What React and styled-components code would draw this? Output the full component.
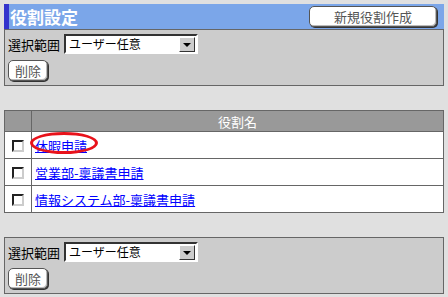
import React from 'react';
import styled, { createGlobalStyle } from 'styled-components';

const roles = ['休暇申請', '営業部-稟議書申請', '情報システム部-稟議書申請'];

function App() {
  return (
    <>
      <GlobalStyle />
      <Page>
        <TitleBar>
          <Title>役割設定</Title>
          <RoundButton wide>新規役割作成</RoundButton>
        </TitleBar>
        <ScopePanel />

        <RoleTable>
          <thead>
            <tr>
              <HeadCell narrow />
              <HeadCell>役割名</HeadCell>
            </tr>
          </thead>
          <tbody>
            {roles.map((name, i) => (
              <tr key={name}>
                <CheckCell><Check /></CheckCell>
                <NameCell>
                  <RoleLink href="#">
                    {name}
                    {i === 0 && <Circle />}
                  </RoleLink>
                </NameCell>
              </tr>
            ))}
          </tbody>
        </RoleTable>

        <ScopePanel bottom />
      </Page>
    </>
  );
}

function ScopePanel({ bottom }) {
  return (
    <Panel bottom={bottom}>
      <Row>
        <Label>選択範囲</Label>
        <Select>
          <SelectText>ユーザー任意</SelectText>
          <Arrow />
        </Select>
      </Row>
      <Row>
        <RoundButton>削除</RoundButton>
      </Row>
    </Panel>
  );
}

export default App;

const GlobalStyle = createGlobalStyle`
  body {
    margin: 0;
    background: #e0e0e0;
    font-family: "Noto Sans CJK JP", "DejaVu Sans", sans-serif;
  }
`;

const Page = styled.div`
  padding: 4px 4px 0 4px;
  width: 440px;
`;

const TitleBar = styled.div`
  display: flex;
  align-items: center;
  justify-content: space-between;
  height: 25px;
  background: #7ba6e9;
  border-left: 5px solid #3333cc;
  padding-right: 7px;
`;

const Title = styled.h1`
  margin: 0 0 0 1px;
  font-size: 17px;
  line-height: 25px;
  font-weight: bold;
  color: #fff;
`;

const RoundButton = styled.button`
  box-sizing: border-box;
  height: 21px;
  width: ${p => (p.wide ? '128px' : '40px')};
  padding: 0;
  font-family: inherit;
  font-size: 13px;
  line-height: 19px;
  color: #555;
  background: #fff;
  border: 1px solid #555;
  border-radius: 5px;
  box-shadow: 1px 1px 0 #333, inset -1px -1px 0 #bbb;
`;

const Panel = styled.div`
  display: flex;
  flex-direction: column;
  gap: 6px;
  box-sizing: border-box;
  width: 440px;
  height: 57px;
  margin-top: ${p => (p.bottom ? '24px' : '0')};
  padding: 4px 3px;
  background: #cccccc;
  border: 1px solid #666;
`;

const Row = styled.div`
  display: flex;
  align-items: center;
  gap: 4px;
`;

const Label = styled.span`
  font-size: 13px;
  color: #000;
`;

const Select = styled.div`
  box-sizing: border-box;
  display: flex;
  align-items: center;
  justify-content: space-between;
  width: 134px;
  height: 20px;
  background: #fff;
  border: 2px solid;
  border-color: #333 #fff #fff #333;
  padding: 0 1px 0 3px;
`;

const SelectText = styled.span`
  font-size: 12px;
  line-height: 16px;
  color: #000;
`;

const Arrow = styled.span`
  position: relative;
  box-sizing: border-box;
  width: 16px;
  height: 15px;
  background: #ccc;
  border: 1px solid;
  border-color: #fff #333 #333 #fff;
  &::after {
    content: '';
    position: absolute;
    left: 3px;
    top: 5px;
    border-left: 4px solid transparent;
    border-right: 4px solid transparent;
    border-top: 4px solid #000;
  }
`;

const RoleTable = styled.table`
  margin-top: 24px;
  width: 440px;
  border-collapse: collapse;
  border: 1px solid #666;
  background: #fff;
`;

const HeadCell = styled.th`
  height: 20px;
  width: ${p => (p.narrow ? '26px' : 'auto')};
  padding: 0;
  background: #999;
  color: #fff;
  font-size: 13px;
  font-weight: normal;
  border: 1px solid #666;
`;

const CheckCell = styled.td`
  height: 26px;
  padding: 0;
  border: 1px solid #666;
  text-align: center;
  vertical-align: middle;
`;

const Check = styled.span`
  display: inline-block;
  box-sizing: border-box;
  width: 12px;
  height: 12px;
  margin-top: 3px;
  background: #fff;
  border: 2px solid;
  border-color: #222 #ccc #ccc #222;
`;

const NameCell = styled.td`
  padding: 0 0 0 3px;
  border: 1px solid #666;
  font-size: 13px;
`;

const RoleLink = styled.a`
  position: relative;
  color: #0000ff;
  text-decoration: underline;
`;

const Circle = styled.span`
  position: absolute;
  left: -5px;
  top: -4px;
  width: 62px;
  height: 16px;
  border: 3px solid #e8121a;
  border-radius: 50%;
`;
